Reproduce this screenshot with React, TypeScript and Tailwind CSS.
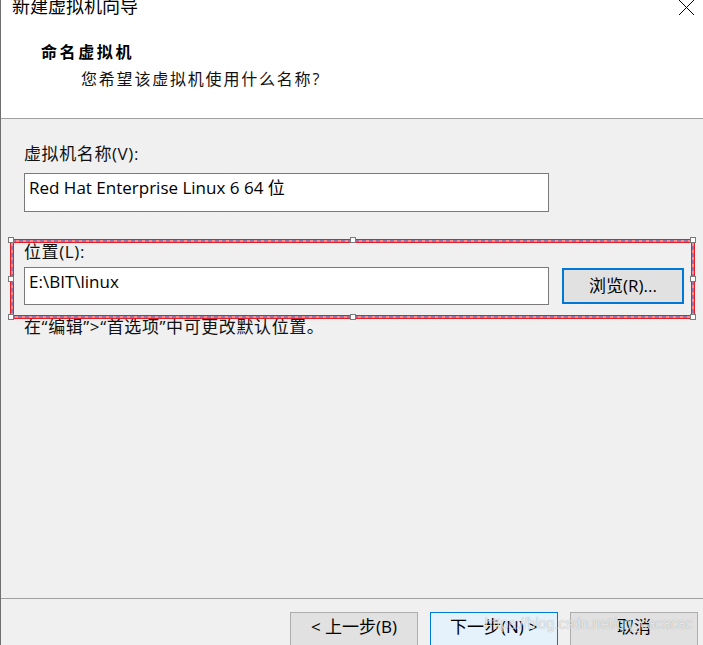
import React from "react";

const FONT = "font-[family-name:'Open_Sans','Noto_Sans_CJK_SC',sans-serif]";

function Handle({ x, y }: { x: number; y: number }) {
  return <rect x={x - 2.5} y={y - 2.5} width={5} height={5} fill="#ffffff" stroke="#7a7a7a" strokeWidth={1} />;
}

export default function App() {
  return (
    <div className={`${FONT} relative flex h-[645px] w-[703px] flex-col overflow-hidden border-l border-[#6e6e6e] bg-[#f0f0f0] text-black`}>
      {/* Header */}
      <div className="h-[119px] shrink-0 border-b border-[#a0a0a0] bg-white">
        <div className="flex h-[15px] items-start justify-between">
          <div className="ml-[11px] mt-[-3px] text-[18px] leading-[18px]">新建虚拟机向导</div>
          <svg className="mr-[8px] mt-[-1px]" width="17" height="17" viewBox="0 0 17 17">
            <path d="M1 1 L16 16 M16 1 L1 16" stroke="#000" strokeWidth="1" fill="none" />
          </svg>
        </div>
        <div className="ml-[40px] mt-[27px] text-[16px] font-bold leading-[20px] tracking-[2.6px]">命名虚拟机</div>
        <div className="ml-[80px] mt-[7px] text-[16px] leading-[20px] tracking-[1.8px] text-[#111]">
          您希望该虚拟机使用什么名称?
        </div>
      </div>

      {/* Body */}
      <div className="flex-1 pl-[23px]">
        <div className="mt-[23px] text-[17px] leading-[24px] tracking-[0.6px] text-[#111]">虚拟机名称(V):</div>
        <div className="mt-[7px] h-[39px] w-[525px] border border-[#7a7a7a] bg-white pl-[4px] pt-[3px] text-[17px] leading-[22px]">
          Red Hat Enterprise Linux 6 64 位
        </div>
        <div className="mt-[28px] text-[17px] leading-[24px] tracking-[0.6px] text-[#111]">位置(L):</div>
        <div className="mt-[3px] flex items-center">
          <div className="h-[38px] w-[525px] border border-[#7a7a7a] bg-white pl-[4px] pt-[3px] text-[17px] leading-[22px]">
            E:\BIT\linux
          </div>
          <div className="ml-[13px] flex h-[36px] w-[122px] items-center justify-center border-2 border-[#0078d7] bg-[#e1e1e1] text-[17px] leading-[22px]">
            浏览(R)...
          </div>
        </div>
        <div className="mt-[10px] text-[17px] leading-[24px] tracking-[0.6px] text-[#111]">
          在“编辑”&gt;“首选项”中可更改默认位置。
        </div>
      </div>

      {/* Footer */}
      <div className="flex h-[47px] shrink-0 justify-end gap-[12px] border-t border-[#a0a0a0] pr-[5px] pt-[13px]">
        <div className="flex h-[38px] w-[128px] justify-center border border-[#adadad] bg-[#e1e1e1] pt-[3px] text-[17px] leading-[22px]">
          &lt; 上一步(B)
        </div>
        <div className="flex h-[38px] w-[128px] justify-center border border-[#0078d7] bg-[#e5f1fb] pt-[3px] text-[17px] leading-[22px]">
          下一步(N) &gt;
        </div>
        <div className="flex h-[38px] w-[128px] justify-center border border-[#adadad] bg-[#e1e1e1] pt-[3px] text-[17px] leading-[22px]">
          取消
        </div>
      </div>

      {/* Selection overlay */}
      <svg className="pointer-events-none absolute left-[7px] top-[237px]" width="690" height="84" viewBox="0 0 690 84">
        <rect x="4" y="4" width="681" height="76" fill="none" stroke="#e81c24" strokeWidth="4" />
        <rect x="4" y="4" width="681" height="76" fill="none" stroke="#ffffff" strokeWidth="1" />
        <rect x="4" y="4" width="681" height="76" fill="none" stroke="#2f5fc4" strokeWidth="1" strokeDasharray="4 3" />
        <Handle x={3} y={3} />
        <Handle x={3} y={42} />
        <Handle x={3} y={80} />
        <Handle x={345} y={3} />
        <Handle x={345} y={80} />
        <Handle x={685} y={3} />
        <Handle x={685} y={42} />
        <Handle x={685} y={80} />
      </svg>

      {/* Watermark */}
      <div className="pointer-events-none absolute right-[10px] top-[613px] origin-right scale-x-[0.84] whitespace-nowrap font-[family-name:'Liberation_Sans',sans-serif] text-[17px] leading-[22px] text-white/75 [text-shadow:0_0_1px_rgba(0,0,0,0.35)]">
        https://blog.csdn.net/qq_cacacac
      </div>
    </div>
  );
}
